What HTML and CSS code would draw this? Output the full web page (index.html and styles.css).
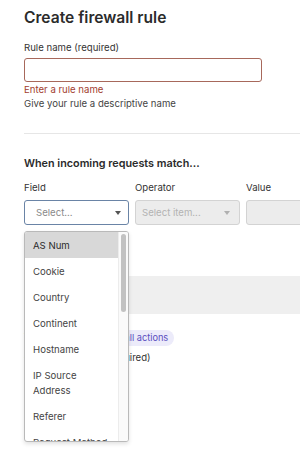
FILE: index.html
```html
<!DOCTYPE html>
<html lang="en">
<head>
    <meta charset="UTF-8">
    <meta name="viewport" content="width=device-width, initial-scale=1.0">
    <title>Create firewall rule</title>
    <link rel="stylesheet" href="styles.css">
</head>
<body>
    <main class="page">
        <h1 class="title">Create firewall rule</h1>

        <!-- Rule name -->
        <div class="field">
            <label class="label" for="rule-name">Rule name (required)</label>
            <input type="text" id="rule-name" class="text-input is-error">
            <p class="error-text">Enter a rule name</p>
            <p class="help-text">Give your rule a descriptive name</p>
        </div>

        <hr class="divider">

        <!-- Expression builder -->
        <h2 class="section-title">When incoming requests match...</h2>
        <div class="match-row">
            <div class="match-col">
                <span class="label">Field</span>
                <div class="select-wrap">
                    <div class="select is-open">
                        <span class="placeholder">Select...</span>
                        <span class="caret"></span>
                    </div>
                    <div class="dropdown">
                        <ul class="option-list">
                            <li class="option is-active">AS Num</li>
                            <li class="option">Cookie</li>
                            <li class="option">Country</li>
                            <li class="option">Continent</li>
                            <li class="option">Hostname</li>
                            <li class="option">IP Source Address</li>
                            <li class="option">Referer</li>
                            <li class="option">Request Method</li>
                            <li class="option">SSL/HTTPS</li>
                        </ul>
                        <div class="scroll-track"><div class="scroll-thumb"></div></div>
                    </div>
                </div>
            </div>
            <div class="match-col">
                <span class="label">Operator</span>
                <div class="select is-disabled">
                    <span class="placeholder">Select item...</span>
                    <span class="caret"></span>
                </div>
            </div>
            <div class="match-col match-col-wide">
                <span class="label">Value</span>
                <div class="select is-disabled"></div>
            </div>
        </div>

        <div class="preview"></div>

        <!-- Action -->
        <div class="action-head">
            <h2 class="section-title">Then...</h2>
            <span class="badge">View firewall actions</span>
        </div>
        <span class="label">Choose an action (required)</span>
    </main>
</body>
</html>
```

FILE: styles.css
```css
/* Basic Styling */
body {
    margin: 0;
    padding: 0;
    font-family: Inter, "Liberation Sans", Arial, sans-serif;
    font-size: 9.6px;
    color: #333;
    background-color: #fff;
}
.page {
    box-sizing: border-box;
    width: 300px;
    min-height: 452px;
    padding: 7px 0 0 24px;
    overflow: hidden;
}
.title {
    font-size: 15.6px;
    line-height: 22px;
    font-weight: 600;
    color: #2b2b2b;
    margin: 0 0 11px 0;
}
.label {
    display: block;
    line-height: 15px;
    color: #333;
}
/* Rule name */
.text-input {
    display: block;
    box-sizing: border-box;
    width: 238px;
    height: 24px;
    margin: 3px 0 0 0;
    border: 1px solid #ccc;
    border-radius: 3px;
    padding: 0 8px;
    font: inherit;
}
.text-input.is-error {
    border-color: #a7685b;
}
.error-text {
    margin: 1px 0 0 0;
    line-height: 14px;
    color: #a2402f;
}
.help-text {
    margin: 0;
    line-height: 14px;
    color: #444;
}
.divider {
    border: none;
    border-top: 1px solid #e6e6e6;
    margin: 22px 0 0 0;
}
.section-title {
    font-size: 10.8px;
    line-height: 16px;
    font-weight: 600;
    color: #2b2b2b;
    margin: 22px 0 0 0;
}
/* Field / Operator / Value */
.match-row {
    display: flex;
    gap: 6px;
    margin-top: 8px;
}
.match-col {
    flex: none;
    width: 105px;
    display: flex;
    flex-direction: column;
    gap: 5px;
}
.match-col-wide {
    width: 120px;
}
.select-wrap {
    position: relative;
}
.select {
    box-sizing: border-box;
    height: 25px;
    display: flex;
    align-items: center;
    justify-content: space-between;
    padding: 0 7px 0 11px;
    border: 1px solid #d3d3d3;
    border-radius: 3px;
    background-color: #fff;
}
.select.is-open {
    border-color: #6a84a6;
}
.select.is-disabled {
    background-color: #ececec;
    padding-left: 6px;
    padding-right: 9px;
}
.placeholder {
    color: #8a8a8a;
}
.is-disabled .placeholder {
    color: #b3b3b3;
}
.caret {
    width: 0;
    height: 0;
    border-left: 3.5px solid transparent;
    border-right: 3.5px solid transparent;
    border-top: 4px solid #555;
}
.is-disabled .caret {
    border-top-color: #b0b0b0;
}
/* Open dropdown */
.dropdown {
    position: absolute;
    top: 31px;
    left: 0;
    width: 105px;
    height: 211px;
    box-sizing: border-box;
    display: flex;
    background-color: #fff;
    border: 1px solid #b9b9b9;
    border-radius: 3px;
    box-shadow: 0 2px 4px rgba(0, 0, 0, 0.12);
    overflow: hidden;
    z-index: 10;
}
.option-list {
    flex: 1;
    list-style: none;
    margin: 0;
    padding: 0;
    overflow: hidden;
}
.option {
    padding: 5.5px 8px 5.5px 8px;
    line-height: 15px;
    color: #444;
}
.option.is-active {
    background-color: #d8d8d8;
    color: #2b2b2b;
}
.scroll-track {
    width: 9px;
    border-left: 1px solid #ececec;
    background-color: #fafafa;
}
.scroll-thumb {
    margin: 2px 2px 0 2px;
    height: 78px;
    border-radius: 3px;
    background-color: #c2c2c2;
}
/* Below the builder, mostly covered */
.preview {
    height: 38px;
    margin-top: 51px;
    background-color: #efefef;
}
.action-head {
    display: flex;
    align-items: center;
    gap: 12px;
    margin-top: 16px;
}
.action-head .section-title {
    margin: 0;
}
.badge {
    line-height: 16px;
    padding: 0 6px;
    border-radius: 8px;
    background-color: #ecebfa;
    color: #5a4fbf;
    font-size: 9.2px;
}
.action-head + .label {
    margin-top: 4px;
}
```
